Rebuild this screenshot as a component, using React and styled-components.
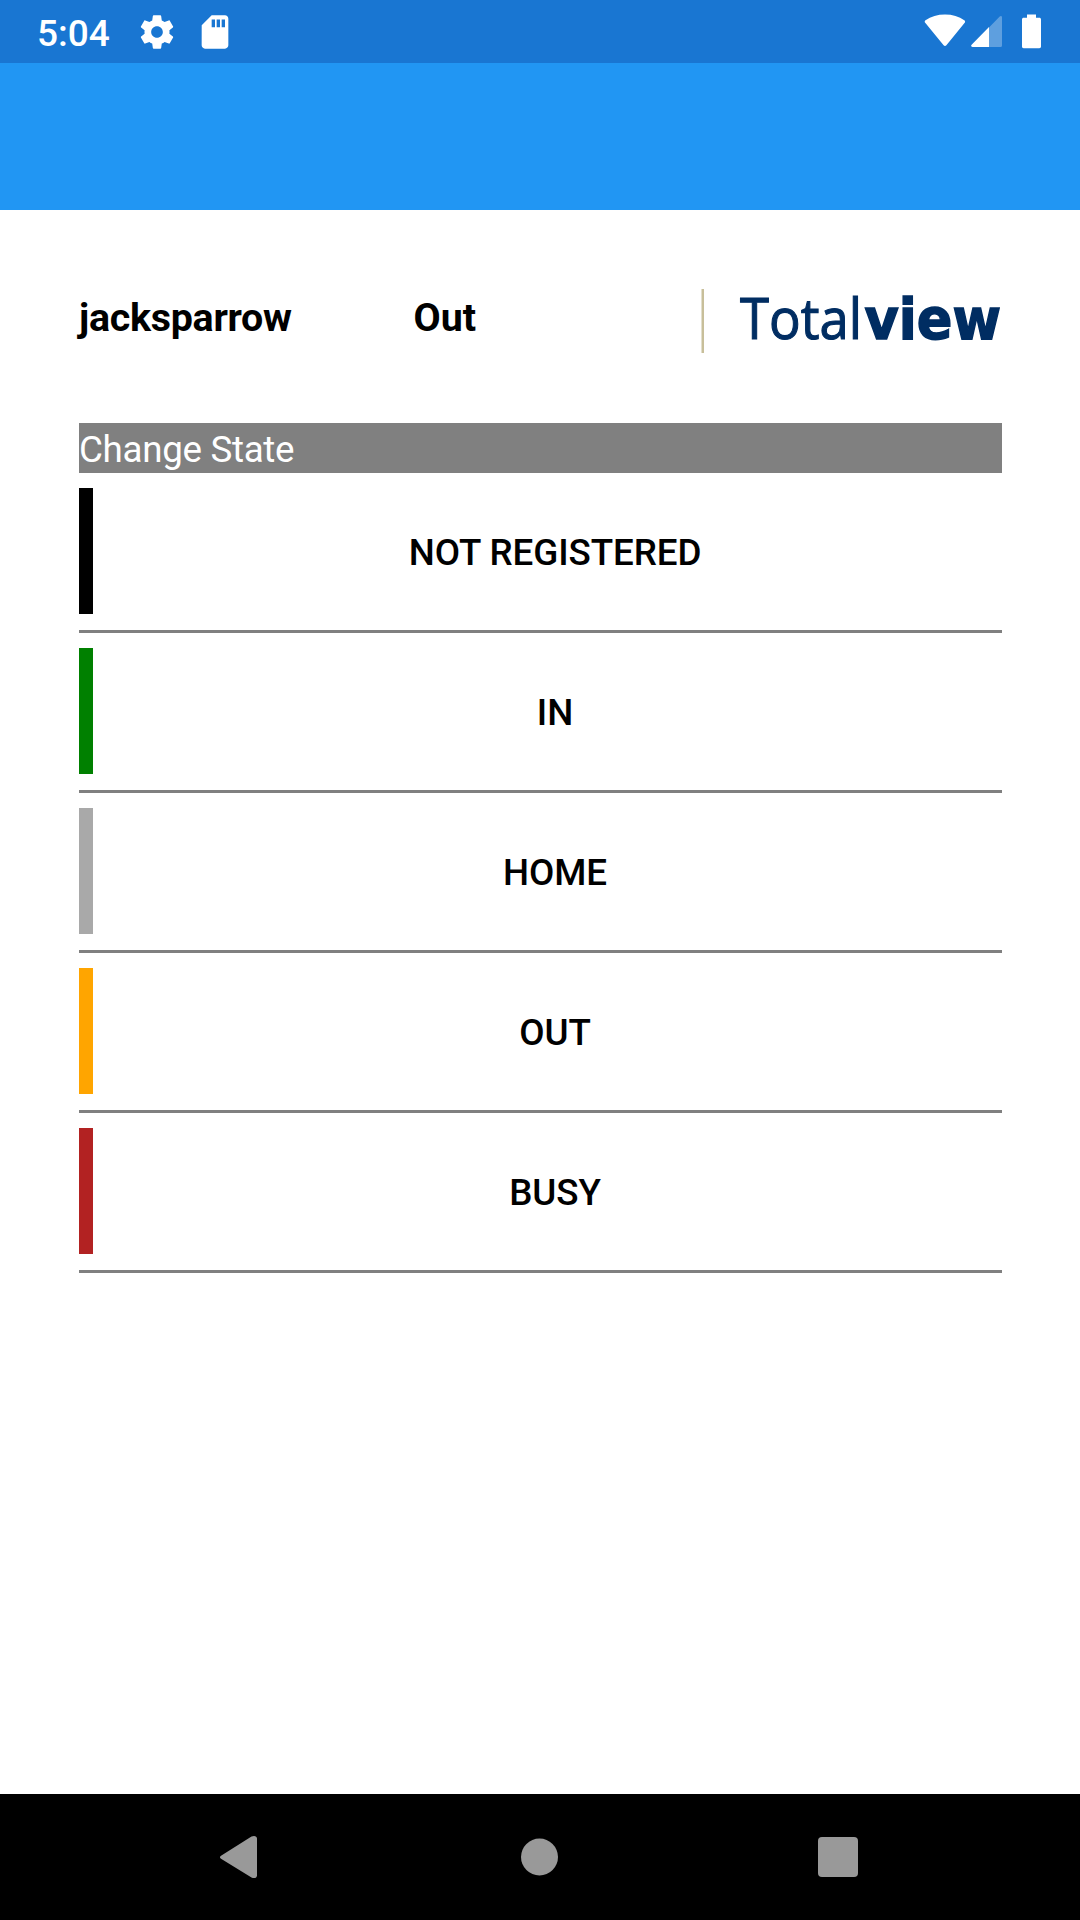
import React from "react";
import styled, { createGlobalStyle } from "styled-components";

const GlobalStyle = createGlobalStyle`
  * { box-sizing: border-box; }
  body { margin: 0; background: #fff; }
`;

const Screen = styled.div`
  width: 1080px;
  height: 1920px;
  display: flex;
  flex-direction: column;
  background: #fff;
  color: #000;
  font-family: Roboto, "Liberation Sans", sans-serif;
  overflow: hidden;
`;

const StatusBar = styled.header`
  height: 63px;
  flex: none;
  display: flex;
  justify-content: space-between;
  padding: 0 38px 0 37px;
  background: #1976d2;
  color: #fff;
`;

const StatusGroup = styled.div`
  display: flex;
  align-items: center;
  padding-bottom: ${(p) => p.$lift || 0}px;
`;

const Clock = styled.span`
  width: 100px;
  padding-top: 4px;
  font-size: 37px;
  line-height: 44px;
  font-weight: 500;
`;

const Icon = styled.svg`
  display: block;
  flex: none;
  fill: #fff;
  margin-left: ${(p) => p.$gap || 0}px;
`;

const AppBar = styled.div`
  height: 147px;
  flex: none;
  background: #2196f3;
`;

const Content = styled.main`
  flex: 1;
  padding: 67px 78px 0 79px;
`;

const UserRow = styled.section`
  height: 146px;
  display: flex;
  align-items: flex-start;
`;

const UserLabel = styled.span`
  width: ${(p) => p.$width}px;
  padding-top: 18px;
  font-size: 39.4px;
  line-height: 46px;
  font-weight: 700;
  letter-spacing: ${(p) => p.$tracking || 0}px;
  white-space: nowrap;
`;

const Logo = styled.svg`
  display: block;
  flex: none;
  overflow: visible;
  fill: #002d62;
`;

const LogoLight = styled.text`
  font: 500 57px "Open Sans", "Noto Sans", sans-serif;
  stroke: #002d62;
  stroke-width: 1.1px;
`;

const LogoBold = styled.text`
  font: 700 57px "DejaVu Sans", sans-serif;
  stroke: #002d62;
  stroke-width: 1.5px;
`;

const SectionTitle = styled.h2`
  margin: 0;
  height: 50px;
  background: #808080;
  color: #fff;
  font-size: 36.75px;
  line-height: 54px;
  font-weight: 400;
  letter-spacing: -0.32px;
`;

const StateList = styled.div`
  display: flex;
  flex-direction: column;
`;

const StateRow = styled.div`
  height: 160px;
  display: flex;
  gap: 16px;
  padding: 15px 0 16px;
  border-bottom: 3px solid #808080;
`;

const StateColor = styled.span`
  width: 14px;
  background: ${(p) => p.$color};
`;

const StateButton = styled.button`
  flex: 1;
  padding: 2px 1px 0 0;
  border: 0;
  background: none;
  color: #000;
  font: 500 36.75px Roboto, "Liberation Sans", sans-serif;
  letter-spacing: -0.08px;
  text-transform: uppercase;
`;

const NavBar = styled.nav`
  height: 126px;
  flex: none;
  display: flex;
  align-items: center;
  justify-content: space-between;
  padding: 0 200px 1px 199px;
  background: #000;
`;

const NavIcon = styled.svg`
  display: block;
  fill: #999;
`;

const states = [
  { name: "Not registered", color: "#000000" },
  { name: "In", color: "#008000" },
  { name: "Home", color: "#a9a9a9" },
  { name: "Out", color: "#ffa500" },
  { name: "Busy", color: "#b22222" },
];

export default function App() {
  return (
    <Screen>
      <GlobalStyle />
      <StatusBar>
        <StatusGroup>
          <Clock>5:04</Clock>
          <Icon width="40" height="40" viewBox="0 0 24 24">
            <path d="M19.43 12.98c.04-.32.07-.64.07-.98s-.03-.66-.07-.98l2.11-1.65c.19-.15.24-.42.12-.64l-2-3.46c-.12-.22-.39-.3-.61-.22l-2.49 1c-.52-.4-1.08-.73-1.69-.98l-.38-2.65C14.46 2.18 14.25 2 14 2h-4c-.25 0-.46.18-.49.42l-.38 2.65c-.61.25-1.17.59-1.69.98l-2.49-1c-.23-.09-.49 0-.61.22l-2 3.46c-.13.22-.07.49.12.64l2.11 1.65c-.04.32-.07.65-.07.98s.03.66.07.98l-2.11 1.65c-.19.15-.24.42-.12.64l2 3.46c.12.22.39.3.61.22l2.49-1c.52.4 1.08.73 1.69.98l.38 2.65c.03.24.24.42.49.42h4c.25 0 .46-.18.49-.42l.38-2.65c.61-.25 1.17-.59 1.69-.98l2.49 1c.23.09.49 0 .61-.22l2-3.46c.12-.22.07-.49-.12-.64l-2.11-1.65zM12 15.500c-1.930 0-3.500-1.570-3.500-3.500s1.570-3.500 3.500-3.500 3.500 1.570 3.500 3.500-1.570 3.500-3.500 3.500z" />
          </Icon>
          <Icon $gap={18} width="40" height="40" viewBox="0 0 24 24">
            <path d="M18 2h-8L4.020 8 4 20c0 1.100.9 2 2 2h12c1.100 0 2-.9 2-2V4c0-1.100-.9-2-2-2zm-6 7.200h-2V4.500h2v4.700zm3 0h-2V4.500h2v4.700zm3 0h-2V4.500h2v4.700z" />
          </Icon>
        </StatusGroup>
        <StatusGroup $lift={1}>
          <Icon width="42" height="35" viewBox="0 0 42 35">
            <path d="M1.2 8.800C.4 8 .6 6.900 1.500 6.200C7 2.500 13.500.5 21 .5s14 2 19.300 5.700c.9.700 1.100 1.800.4 2.600L22.400 31.200c-.8 1-2 1-2.800 0z" />
          </Icon>
          <Icon $gap={5} width="32" height="33" viewBox="0 0 32 33">
            <path fillOpacity=".3" d="M18 12.500 28.700 1.600C29.800.5 31 1 31 2.500V30.500a1.500 1.500 0 0 1-1.500 1.500H18z" />
            <path d="M18 12V32H1.500C.2 32-.3 30.700.6 29.800z" />
          </Icon>
          <Icon $gap={18} width="21" height="35" viewBox="0 0 21 35">
            <path d="M6 .5h9v3.200h3.300c1 0 1.700.7 1.700 1.700v27.200c0 1-.7 1.700-1.700 1.700H2.700c-1 0-1.700-.7-1.700-1.700V5.400c0-1 .7-1.700 1.700-1.700H6z" />
          </Icon>
        </StatusGroup>
      </StatusBar>
      <AppBar />
      <Content>
        <UserRow>
          <UserLabel $width={335} $tracking={-0.28}>jacksparrow</UserLabel>
          <UserLabel $width={287}>Out</UserLabel>
          <Logo width="302" height="90" viewBox="0 -12 302 90">
            <rect x="1.500" y="0" width="2.500" height="64" fill="#c8bf9a" />
            <LogoLight x="40" y="49.500" textLength="122" lengthAdjust="spacingAndGlyphs">Total</LogoLight>
            <LogoBold x="164.500" y="49.500" textLength="136.500" lengthAdjust="spacingAndGlyphs">view</LogoBold>
          </Logo>
        </UserRow>
        <SectionTitle>Change State</SectionTitle>
        <StateList>
          {states.map((s) => (
            <StateRow key={s.name}>
              <StateColor $color={s.color} />
              <StateButton>{s.name}</StateButton>
            </StateRow>
          ))}
        </StateList>
      </Content>
      <NavBar>
        <NavIcon width="78" height="44" viewBox="0 0 78 44">
          <path d="M22 23.800C20.600 23 20.600 21.500 22 20.700L52.500 1.600C55 .2 58 1 58 3.500V40.500C58 43 55 43.800 52.500 42.400z" />
        </NavIcon>
        <NavIcon width="38" height="38" viewBox="0 0 38 38">
          <circle cx="18.500" cy="19" r="18.500" />
        </NavIcon>
        <NavIcon width="78" height="40" viewBox="0 0 78 40">
          <rect x="16" width="40" height="40" rx="4" />
        </NavIcon>
      </NavBar>
    </Screen>
  );
}
